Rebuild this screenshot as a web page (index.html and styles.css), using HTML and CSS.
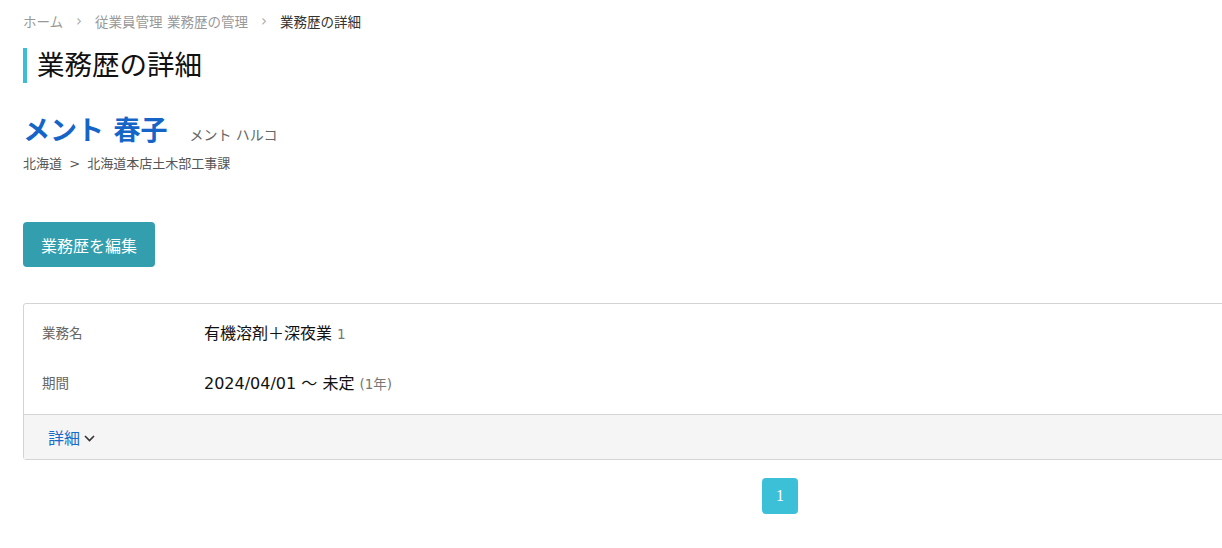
FILE: index.html
```html
<!DOCTYPE html>
<html lang="ja">
<head>
<meta charset="utf-8">
<link rel="stylesheet" href="styles.css">
</head>
<body>
<div class="viewport">
  <div class="page">
    <nav class="crumbs">
      <a class="crumb">ホーム</a>
      <span class="sep">›</span>
      <a class="crumb">従業員管理 業務歴の管理</a>
      <span class="sep">›</span>
      <span class="crumb current">業務歴の詳細</span>
    </nav>
    <h1 class="title">業務歴の詳細</h1>
    <div class="person">
      <div class="name-row">
        <span class="name">メント 春子</span>
        <span class="kana">メント ハルコ</span>
      </div>
      <div class="org">北海道 &gt; 北海道本店土木部工事課</div>
    </div>
    <button class="btn">業務歴を編集</button>
    <section class="card">
      <div class="card-body">
        <div class="row">
          <div class="label">業務名</div>
          <div class="value">有機溶剤＋深夜業 <span class="muted">1</span></div>
        </div>
        <div class="row">
          <div class="label">期間</div>
          <div class="value">2024/04/01 ～ 未定 <span class="muted small">(1年)</span></div>
        </div>
      </div>
      <div class="card-foot">
        <span class="toggle">詳細 <svg class="chev" width="11" height="7" viewBox="0 0 11 7"><path d="M1 1l4.5 4.5L10 1" fill="none" stroke="#333" stroke-width="1.6"/></svg></span>
      </div>
    </section>
    <div class="pager">
      <span class="page-num">1</span>
    </div>
  </div>
</div>
</body>
</html>
```

FILE: styles.css
```css
* { box-sizing: border-box; }
html, body { margin: 0; padding: 0; background: #fff; }
body {
  font-family: "DejaVu Sans", "Noto Sans CJK JP", sans-serif;
  color: #222;
}
.viewport { width: 1222px; height: 548px; overflow: hidden; }
.page { width: 1537px; padding: 0 0 0 23px; }
.crumbs {
  display: flex; align-items: center;
  height: 40px; padding-top: 1px;
  font-size: 13.5px; color: #999;
}
.crumb { color: #999; }
.crumb.current { color: #333; }
.sep { margin: 0 13px; color: #aaa; font-size: 15px; }
.title {
  margin: 8px 0 0;
  border-left: 4px solid #3dbcd5;
  padding-left: 10px;
  font-size: 27.5px; font-weight: 400; line-height: 35px; height: 35px;
  color: #111;
}
.person { margin-top: 30px; }
.name-row { display: flex; align-items: baseline; }
.name { font-size: 27px; font-weight: 700; color: #1565c8; line-height: 36px; }
.kana { font-size: 14px; color: #666; margin-left: 22px; }
.org { font-size: 13px; color: #555; margin-top: 6px; line-height: 18px; word-spacing: 3px; }
.btn {
  display: block;
  margin-top: 49px;
  width: 132px; height: 45px;
  background: #339eae; color: #fff; border: 0; border-radius: 4px;
  font-family: inherit; font-size: 16px;
}
.card {
  margin-top: 36px;
  border: 1px solid #d4d4d4; border-radius: 3px;
  width: 1514px;
}
.card-body { padding: 3px 0 7px; }
.row { display: flex; align-items: center; height: 50px; }
.label { width: 180px; padding-left: 18px; font-size: 13.5px; color: #666; }
.value { font-size: 16px; color: #111; }
.muted { color: #777; font-size: 13.5px; }
.card-foot {
  border-top: 1px solid #d4d4d4;
  background: #f5f5f5;
  height: 45px;
  display: flex; align-items: center;
  padding-left: 24px;
}
.toggle { color: #1a6ac9; font-size: 16px; display: flex; align-items: center; gap: 4px; }
.chev { margin-top: 2px; }
.pager { width: 1514px; display: flex; justify-content: center; margin-top: 18px; }
.page-num {
  width: 36px; height: 36px; border-radius: 4px;
  background: #3cc0d8; color: #fff;
  display: flex; align-items: center; justify-content: center;
  font-family: "Liberation Serif", serif; font-size: 16px;
}
```
